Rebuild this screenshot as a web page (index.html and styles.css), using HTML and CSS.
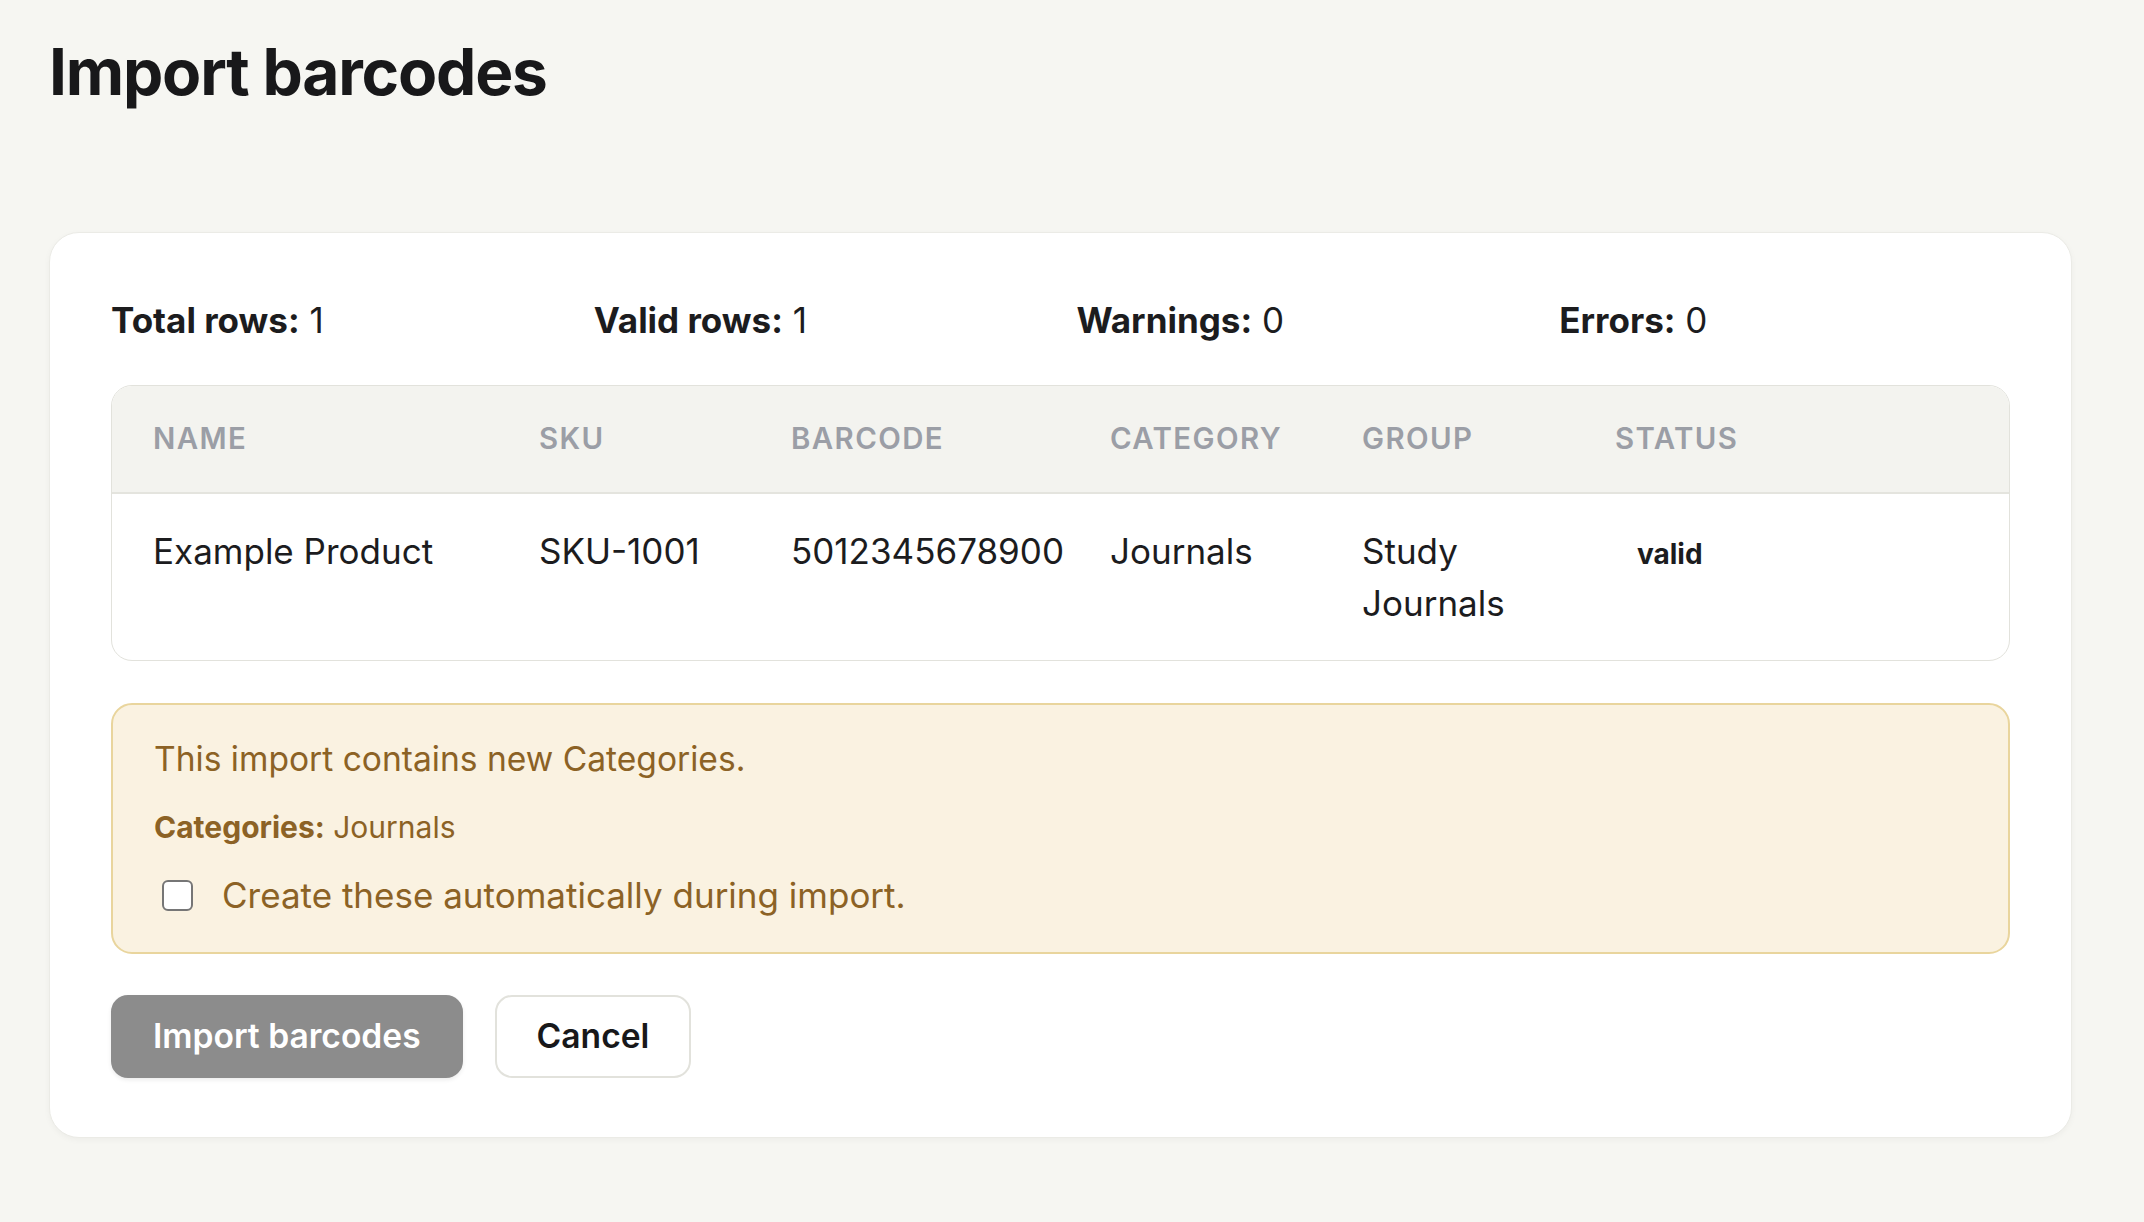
FILE: index.html
```html
<!DOCTYPE html>
<html lang="en">
<head>
    <meta charset="UTF-8">
    <title>Import barcodes</title>
    <link rel="stylesheet" href="styles.css">
</head>
<body>
    <div class="page">
        <h1 class="page-title">Import barcodes</h1>

        <div class="card">
            <div class="stats">
                <div><strong>Total rows:</strong> 1</div>
                <div><strong>Valid rows:</strong> 1</div>
                <div><strong>Warnings:</strong> 0</div>
                <div><strong>Errors:</strong> 0</div>
            </div>

            <div class="table-wrap">
                <table class="preview">
                    <colgroup>
                        <col class="col-name">
                        <col class="col-sku">
                        <col class="col-barcode">
                        <col class="col-category">
                        <col class="col-group">
                        <col>
                    </colgroup>
                    <tr>
                        <th>Name</th>
                        <th>SKU</th>
                        <th>Barcode</th>
                        <th>Category</th>
                        <th>Group</th>
                        <th>Status</th>
                    </tr>
                    <tr>
                        <td>Example Product</td>
                        <td>SKU-1001</td>
                        <td>5012345678900</td>
                        <td>Journals</td>
                        <td>Study Journals</td>
                        <td><span class="badge">valid</span></td>
                    </tr>
                </table>
            </div>

            <div class="notice">
                <p class="notice-title">This import contains new Categories.</p>
                <p class="notice-list"><strong>Categories:</strong> Journals</p>
                <label class="notice-check">
                    <input type="checkbox">
                    <span>Create these automatically during import.</span>
                </label>
            </div>

            <div class="actions">
                <button class="btn btn-primary" disabled>Import barcodes</button>
                <button class="btn btn-secondary">Cancel</button>
            </div>
        </div>
    </div>
</body>
</html>
```

FILE: styles.css
```css
body {
    margin: 0;
    background-color: #f6f6f2;
    color: #1c1c1e;
    font-family: Inter, "Noto Sans", sans-serif;
    font-size: 35px;
    line-height: 52.5px;
}

.page {
    padding: 33px 72px 86px 49px;
}

.page-title {
    margin: 0;
    font-size: 64px;
    line-height: 77px;
    font-weight: 700;
    letter-spacing: -1.2px;
    color: #18181a;
}

.card {
    margin-top: 122px;
    background-color: #fff;
    border: 1px solid #ebebe6;
    border-radius: 30px;
    padding: 61px 61px 59px 61px;
    box-shadow: 0 2px 6px rgba(0, 0, 0, 0.04);
}

.stats {
    display: grid;
    grid-template-columns: repeat(4, 1fr);
    gap: 32px;
}

.stats strong {
    font-weight: 700;
}

.table-wrap {
    margin-top: 38px;
    border: 1px solid #e2e2dc;
    border-radius: 21px;
    overflow: hidden;
}

.preview {
    width: 100%;
    border-collapse: collapse;
    table-layout: fixed;
}

.col-name { width: 386px; }
.col-sku { width: 252px; }
.col-barcode { width: 319px; }
.col-category { width: 252px; }
.col-group { width: 253px; }

.preview th {
    background-color: #f3f3ef;
    color: #9b9ea6;
    font-size: 29.4px;
    line-height: 41px;
    font-weight: 600;
    text-transform: uppercase;
    letter-spacing: 1.4px;
    text-align: left;
    padding: 32px 0 33px 41px;
    border-bottom: 2px solid #e4e4de;
}

.preview td {
    padding: 31px 0 30px 41px;
    vertical-align: top;
    text-align: left;
}

.badge {
    display: inline-block;
    padding: 0 22px;
    font-size: 28px;
    font-weight: 700;
}

.notice {
    margin-top: 42px;
    background-color: #faf2e1;
    border: 2px solid #e9d59d;
    border-radius: 21px;
    padding: 29px 41px 31px 41px;
    color: #8c6225;
}

.notice p {
    margin: 0;
}

.notice .notice-title {
    font-size: 33.6px;
    line-height: 50.4px;
}

.notice .notice-list {
    margin-top: 21px;
    font-size: 30px;
    line-height: 45px;
}

.notice-list strong {
    font-weight: 700;
}

.notice-check {
    margin-top: 19px;
    display: flex;
    align-items: center;
    gap: 29px;
}

.notice-check input {
    appearance: none;
    width: 31px;
    height: 31px;
    margin: 0 0 0 8px;
    border: 2.5px solid #767676;
    border-radius: 6px;
    background-color: #fff;
}

.actions {
    margin-top: 41px;
    display: flex;
    gap: 32px;
}

.btn {
    font-family: inherit;
    font-size: 33.6px;
    line-height: 50.4px;
    font-weight: 600;
    padding: 14px 40px;
    border-radius: 17px;
    border: 2px solid transparent;
}

.btn-primary {
    background-color: #8c8c8c;
    border-color: #8c8c8c;
    color: #fff;
    box-shadow: 0 2px 4px rgba(0, 0, 0, 0.08);
}

.btn-secondary {
    background-color: #fff;
    border-color: #e2e2dc;
    color: #18181a;
}
```
